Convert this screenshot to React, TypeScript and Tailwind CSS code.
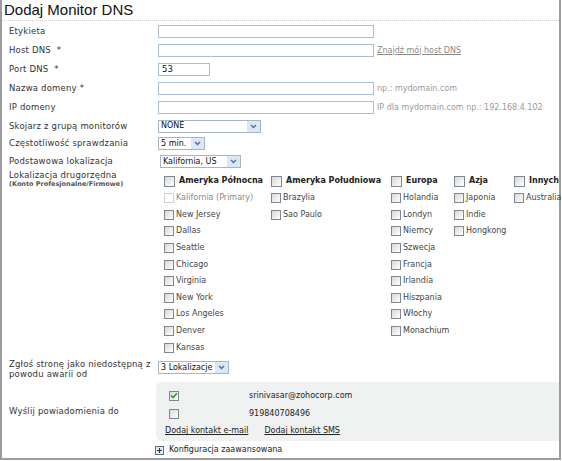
import type { ReactNode } from "react";

const font = { fontFamily: '"DejaVu Sans", Verdana, sans-serif' };

function Box({ w }: { w: string }) {
  return <div className={`${w} h-[13px] border border-[#a9bdd3] bg-white`} />;
}

function Select({ w, value }: { w: string; value: string }) {
  return (
    <div className={`${w} h-[13px] border border-[#a7b4c2] bg-white flex items-center overflow-hidden`}>
      <span className="flex-1 pl-[2px] text-[8px] leading-none text-[#111] whitespace-nowrap">{value}</span>
      <span className="w-[13px] h-[11px] bg-[#dbe6f6] flex items-center justify-center shrink-0">
        <svg width="7" height="5" viewBox="0 0 7 5">
          <path d="M1 1 L3.5 3.5 L6 1" fill="none" stroke="#4d6fa8" strokeWidth="1.4" />
        </svg>
      </span>
    </div>
  );
}

function Check({ checked, disabled, big }: { checked?: boolean; disabled?: boolean; big?: boolean }) {
  if (disabled) {
    return <span className="w-[10px] h-[10px] border border-[#cfcfcf] bg-white shrink-0" />;
  }
  return (
    <span
      className={`${big ? "w-[11px] h-[11px]" : "w-[10px] h-[10px]"} border border-[#7e8893] bg-linear-to-br from-[#d8d8d4] to-white shrink-0 flex items-center justify-center`}
    >
      {checked && (
        <svg width="8" height="7" viewBox="0 0 8 7">
          <path d="M1 3.5 L3 5.5 L7 1.2" fill="none" stroke="#21a121" strokeWidth="1.6" />
        </svg>
      )}
    </span>
  );
}

function Row({ label, h, children }: { label: ReactNode; h: string; children: ReactNode }) {
  return (
    <div className={`flex items-center ${h}`}>
      <div className="w-[156px] pl-[7px] text-[8.5px] tracking-[0.2px] text-[#333] whitespace-pre">{label}</div>
      <div className="flex items-center">{children}</div>
    </div>
  );
}

const columns = [
  { title: "Ameryka Północna", w: "w-[107px]", items: ["Kalifornia (Primary)", "New Jersey", "Dallas", "Seattle", "Chicago", "Virginia", "New York", "Los Angeles", "Denver", "Kansas"] },
  { title: "Ameryka Południowa", w: "w-[120px]", items: ["Brazylia", "Sao Paulo"] },
  { title: "Europa", w: "w-[63px]", items: ["Holandia", "Londyn", "Niemcy", "Szwecja", "Francja", "Irlandia", "Hiszpania", "Włochy", "Monachium"] },
  { title: "Azja", w: "w-[60px]", items: ["Japonia", "Indie", "Hongkong"] },
  { title: "Innych", w: "w-[44px]", items: ["Australia"] },
];

export default function App() {
  return (
    <div className="w-[562px] h-[461px] bg-white overflow-hidden" style={font}>
      <div className="w-[561px] h-[460px] border-l-2 border-r-2 border-b-2 border-[#9c9c9c]">
        {/* nagłówek */}
        <div className="h-[21px] border-b border-dotted border-[#cfcfcf] pl-[2px]">
          <h1 className="text-[15px] leading-[19px] text-[#111]" style={{ fontFamily: '"Liberation Sans", Arial, sans-serif' }}>
            Dodaj Monitor DNS
          </h1>
        </div>

        <Row label="Etykieta" h="h-[20px]">
          <Box w="w-[216px]" />
        </Row>
        <Row label="Host DNS  *" h="h-[19px]">
          <Box w="w-[216px]" />
          <span className="ml-[3px] text-[8px] text-[#8a8a8a] underline">Znajdź mój host DNS</span>
        </Row>
        <Row label="Port DNS  *" h="h-[19px]">
          <div className="w-[52px] h-[13px] border border-[#a9bdd3] bg-white text-[8.5px] leading-[11px] pl-[3px] text-[#111]">53</div>
        </Row>
        <Row label="Nazwa domeny *" h="h-[19px]">
          <Box w="w-[216px]" />
          <span className="ml-[3px] text-[8px] text-[#9a9a9a]">np.: mydomain.com</span>
        </Row>
        <Row label="IP domeny" h="h-[19px]">
          <Box w="w-[216px]" />
          <span className="ml-[3px] text-[8px] text-[#9a9a9a]">IP dla mydomain.com np.: 192.168.4.102</span>
        </Row>
        <Row label="Skojarz z grupą monitorów" h="h-[18px]">
          <Select w="w-[103px]" value="NONE" />
        </Row>
        <Row label="Częstotliwość sprawdzania" h="h-[17px]">
          <Select w="w-[47px]" value="5 min." />
        </Row>
        <Row label="Podstawowa lokalizacja" h="h-[19px]">
          <div className="ml-[2px]">
            <Select w="w-[81px]" value="Kalifornia, US" />
          </div>
        </Row>

        {/* lokalizacje */}
        <div className="flex">
          <div className="w-[156px] pl-[7px] -mt-[1px] text-[#333]">
            <div className="text-[8.5px] leading-[10px] tracking-[0.2px]">Lokalizacja drugorzędna</div>
            <div className="text-[6.5px] leading-[8px] font-bold text-[#555]">(Konto Profesjonalne/Firmowe)</div>
          </div>
          <div className="flex pl-[6px]">
            {columns.map((col) => (
              <div key={col.title} className={col.w}>
                <div className="h-[19px] pt-[1px] flex items-center gap-[4px]">
                  <Check big />
                  <span className="text-[8px] font-bold text-[#222] whitespace-nowrap">{col.title}</span>
                </div>
                {col.items.map((item, i) => (
                  <div key={item} className="h-[16.6px] flex items-center gap-[2px]">
                    <Check disabled={col.title === "Ameryka Północna" && i === 0} />
                    <span
                      className={`text-[8px] whitespace-nowrap ${
                        col.title === "Ameryka Północna" && i === 0 ? "text-[#8a8a8a]" : "text-[#444]"
                      }`}
                    >
                      {item}
                    </span>
                  </div>
                ))}
              </div>
            ))}
          </div>
        </div>

        {/* zgłoszenie awarii */}
        <div className="flex h-[26px] items-center">
          <div className="w-[156px] pl-[7px] text-[8.5px] leading-[10px] tracking-[0.2px] text-[#333]">
            Zgłoś stronę jako niedostępną z
            <br />
            powodu awarii od
          </div>
          <div className="-mt-[2px]">
            <Select w="w-[71px]" value="3 Lokalizacje" />
          </div>
        </div>

        {/* powiadomienia */}
        <div className="flex items-center">
          <div className="w-[154px] pl-[7px] text-[8.5px] tracking-[0.2px] text-[#333]">Wyślij powiadomienia do</div>
          <div className="flex-1 bg-[#f0f1f1] rounded-l-[6px] pt-[5px] pb-[1px] text-[8px] text-[#222]">
            <div className="h-[18px] flex items-center">
              <div className="w-[93px] pl-[13px]">
                <Check checked />
              </div>
              <span>srinivasar@zohocorp.com</span>
            </div>
            <div className="h-[18px] flex items-center">
              <div className="w-[93px] pl-[13px]">
                <Check />
              </div>
              <span>919840708496</span>
            </div>
            <div className="h-[17px] flex items-center gap-[16px] pl-[9px] underline">
              <span>Dodaj kontakt e-mail</span>
              <span>Dodaj kontakt SMS</span>
            </div>
          </div>
        </div>

        {/* konfiguracja zaawansowana */}
        <div className="h-[17px] pt-[2px] flex items-center pl-[153px] gap-[5px]">
          <span className="w-[9px] h-[9px] border border-[#5a6f86] bg-[#e9eef5] flex items-center justify-center">
            <svg width="7" height="7" viewBox="0 0 7 7">
              <path d="M3.5 1 V6 M1 3.5 H6" stroke="#2a3a55" strokeWidth="1.2" />
            </svg>
          </span>
          <span className="text-[8px] text-[#222]">Konfiguracja zaawansowana</span>
        </div>
      </div>
    </div>
  );
}
